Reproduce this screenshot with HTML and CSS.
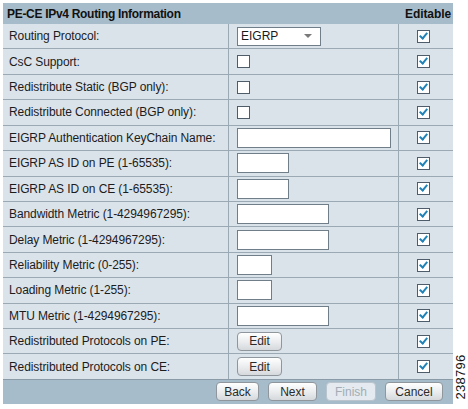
FILE: index.html
```html
<!DOCTYPE html>
<html>
<head>
<meta charset="utf-8">
<link rel="stylesheet" href="styles.css">
</head>
<body>
<div class="panel">
  <div class="head">
    <div class="head-title">PE-CE IPv4 Routing Information</div>
    <div class="head-edit">Editable</div>
  </div>

  <div class="row">
    <div class="lbl">Routing Protocol:</div>
    <div class="val"><div class="select"><span>EIGRP</span><span class="caret"></span></div></div>
    <div class="chk"><span class="cb on"></span></div>
  </div>
  <div class="row">
    <div class="lbl">CsC Support:</div>
    <div class="val"><span class="cb"></span></div>
    <div class="chk"><span class="cb on"></span></div>
  </div>
  <div class="row">
    <div class="lbl">Redistribute Static (BGP only):</div>
    <div class="val"><span class="cb"></span></div>
    <div class="chk"><span class="cb on"></span></div>
  </div>
  <div class="row">
    <div class="lbl">Redistribute Connected (BGP only):</div>
    <div class="val"><span class="cb"></span></div>
    <div class="chk"><span class="cb on"></span></div>
  </div>
  <div class="row">
    <div class="lbl">EIGRP Authentication KeyChain Name:</div>
    <div class="val"><span class="inp w154"></span></div>
    <div class="chk"><span class="cb on"></span></div>
  </div>
  <div class="row">
    <div class="lbl">EIGRP AS ID on PE (1-65535):</div>
    <div class="val"><span class="inp w52"></span></div>
    <div class="chk"><span class="cb on"></span></div>
  </div>
  <div class="row">
    <div class="lbl">EIGRP AS ID on CE (1-65535):</div>
    <div class="val"><span class="inp w52"></span></div>
    <div class="chk"><span class="cb on"></span></div>
  </div>
  <div class="row">
    <div class="lbl">Bandwidth Metric (1-4294967295):</div>
    <div class="val"><span class="inp w92"></span></div>
    <div class="chk"><span class="cb on"></span></div>
  </div>
  <div class="row">
    <div class="lbl">Delay Metric (1-4294967295):</div>
    <div class="val"><span class="inp w92"></span></div>
    <div class="chk"><span class="cb on"></span></div>
  </div>
  <div class="row">
    <div class="lbl">Reliability Metric (0-255):</div>
    <div class="val"><span class="inp w35"></span></div>
    <div class="chk"><span class="cb on"></span></div>
  </div>
  <div class="row">
    <div class="lbl">Loading Metric (1-255):</div>
    <div class="val"><span class="inp w35"></span></div>
    <div class="chk"><span class="cb on"></span></div>
  </div>
  <div class="row">
    <div class="lbl">MTU Metric (1-4294967295):</div>
    <div class="val"><span class="inp w92"></span></div>
    <div class="chk"><span class="cb on"></span></div>
  </div>
  <div class="row">
    <div class="lbl">Redistributed Protocols on PE:</div>
    <div class="val"><span class="btn edit">Edit</span></div>
    <div class="chk"><span class="cb on"></span></div>
  </div>
  <div class="row">
    <div class="lbl">Redistributed Protocols on CE:</div>
    <div class="val"><span class="btn edit">Edit</span></div>
    <div class="chk"><span class="cb on"></span></div>
  </div>

  <div class="foot">
    <span class="btn back">Back</span>
    <span class="btn next">Next</span>
    <span class="btn finish disabled">Finish</span>
    <span class="btn cancel">Cancel</span>
  </div>
</div>
<div class="figno">238796</div>
</body>
</html>
```

FILE: styles.css
```css
html, body {
  margin: 0;
  padding: 0;
  background: #ffffff;
}
body {
  font-family: "Liberation Sans", Arial, sans-serif;
  font-size: 12px;
  color: #1a1a1a;
  position: relative;
  width: 468px;
  height: 409px;
  overflow: hidden;
}
.panel {
  margin: 3px 0 0 3px;
  width: 450px;
  background: #dbe3ea;
}
.head {
  display: flex;
  align-items: center;
  justify-content: space-between;
  height: 21px;
  background: #a6bccb;
  font-weight: bold;
  font-size: 12px;
  color: #111;
}
.head-title {
  padding-left: 4px;
  letter-spacing: -0.3px;
}
.head-edit {
  padding-right: 2px;
  letter-spacing: -0.1px;
}
.row {
  display: grid;
  grid-template-columns: 225px 170px 1fr;
  height: 25.43px;
  box-sizing: border-box;
  border-top: 1px solid #9aa9b4;
}
.head + .row {
  border-top: none;
  height: 24.43px;
}
.lbl {
  display: flex;
  align-items: center;
  padding-left: 6px;
  font-size: 12px;
  color: #1c1c1c;
  letter-spacing: -0.1px;
}
.val {
  display: flex;
  align-items: center;
  padding-left: 8px;
  border-left: 1px solid #9aa9b4;
}
.chk {
  display: flex;
  align-items: center;
  justify-content: center;
  padding-right: 6px;
  border-left: 1px solid #9aa9b4;
}
.cb {
  display: inline-block;
  width: 11px;
  height: 11px;
  border: 1px solid #4e5d69;
  background: #ffffff;
  position: relative;
}
.cb.on::after {
  content: "";
  position: absolute;
  left: 3px;
  top: 0px;
  width: 3px;
  height: 6px;
  border-right: 2px solid #1f82b8;
  border-bottom: 2px solid #1f82b8;
  transform: rotate(40deg);
}
.inp {
  display: inline-block;
  height: 18px;
  border: 1px solid #6f7e89;
  background: #ffffff;
  box-sizing: content-box;
}
.w154 { width: 152px; }
.w52 { width: 50px; }
.w92 { width: 90px; }
.w35 { width: 33px; }
.select {
  display: flex;
  align-items: center;
  justify-content: space-between;
  width: 79px;
  height: 17px;
  border: 1px solid #6f7e89;
  background: #ffffff;
  padding: 0 0 0 3px;
  box-sizing: content-box;
  font-size: 12px;
}
.caret {
  width: 0;
  height: 0;
  margin-right: 8px;
  border-left: 4px solid transparent;
  border-right: 4px solid transparent;
  border-top: 4px solid #7a7a7a;
}
.btn {
  display: inline-flex;
  align-items: center;
  justify-content: center;
  box-sizing: border-box;
  height: 19px;
  border: 1px solid #8f969c;
  border-radius: 4px;
  background: linear-gradient(#ffffff, #e9ebed 55%, #d6d9dc);
  font-size: 12px;
  color: #2a2a2a;
}
.edit { width: 45px; }
.foot {
  display: flex;
  justify-content: flex-end;
  align-items: center;
  gap: 9px;
  height: 25px;
  box-sizing: border-box;
  border-top: 1px solid #8a9aa6;
  background: #a6bccb;
  padding-right: 10px;
}
.back { width: 43px; }
.next { width: 49px; }
.finish { width: 50px; }
.cancel { width: 58px; }
.btn.disabled {
  background: #e4eaef;
  border-color: #b9c4cc;
  color: #a3adb5;
}
.figno {
  position: absolute;
  left: 460px;
  top: 377px;
  transform: translate(-50%, -50%) rotate(-90deg);
  font-size: 13px;
  color: #111;
  letter-spacing: 0.3px;
}
```
